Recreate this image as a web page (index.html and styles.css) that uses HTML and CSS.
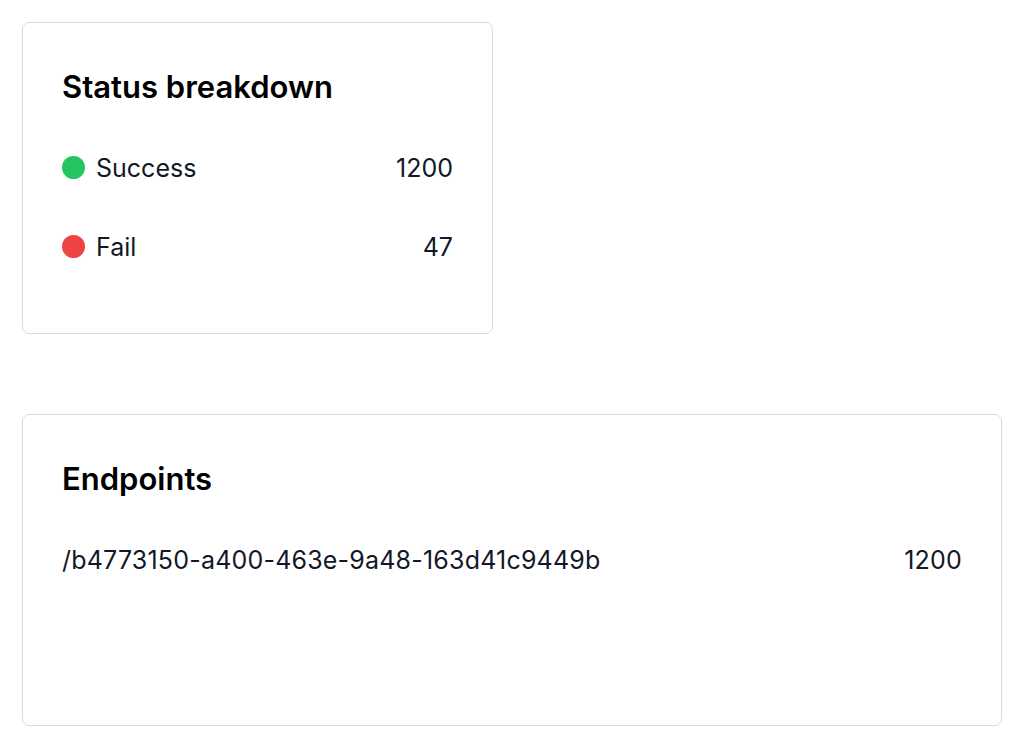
FILE: index.html
```html
<!DOCTYPE html>
<html>
<head>
<meta charset="utf-8">
<link rel="stylesheet" href="styles.css">
</head>
<body>
<div class="page">
  <section class="card card-small">
    <h2 class="card-title">Status breakdown</h2>
    <ul class="list">
      <li class="row row-status">
        <span class="label"><span class="dot dot-green"></span>Success</span>
        <span class="value">1200</span>
      </li>
      <li class="row row-status">
        <span class="label"><span class="dot dot-red"></span>Fail</span>
        <span class="value">47</span>
      </li>
    </ul>
  </section>
  <section class="card card-wide">
    <h2 class="card-title">Endpoints</h2>
    <ul class="list">
      <li class="row row-endpoint">
        <span class="label">/b4773150-a400-463e-9a48-163d41c9449b</span>
        <span class="value">1200</span>
      </li>
    </ul>
  </section>
</div>
</body>
</html>
```
FILE: styles.css
```css
* { box-sizing: border-box; }
html, body { margin: 0; padding: 0; background: #ffffff; }
body {
  font-family: Inter, "Noto Sans", sans-serif;
  color: #111827;
}
.page {
  padding: 22px 22px;
  display: flex;
  flex-direction: column;
  align-items: flex-start;
  gap: 80px;
}
.card {
  border: 1px solid #d6dbe4;
  border-radius: 7px;
  padding: 39px 39px;
  height: 312px;
  background: #fff;
}
.card-small { width: 471px; }
.card-wide { width: 980px; }
.card-title {
  margin: 6px 0 0;
  font-size: 31px;
  font-weight: 600;
  line-height: 38px;
  color: #000;
}
.list {
  list-style: none;
  margin: 0;
  padding: 0;
}
.row {
  display: flex;
  justify-content: space-between;
  align-items: center;
  font-size: 25px;
  line-height: 30px;
  color: #111827;
}
.row-status { height: 79px; }
.row-status:first-child { margin-top: 22px; }
.row-endpoint { margin-top: 47px; letter-spacing: 0.2px; }
.label { display: flex; align-items: center; gap: 11px; }
.dot {
  width: 23px;
  height: 23px;
  border-radius: 50%;
  display: inline-block;
}
.dot-green { background: #22c55e; }
.dot-red { background: #ef4444; }
```
